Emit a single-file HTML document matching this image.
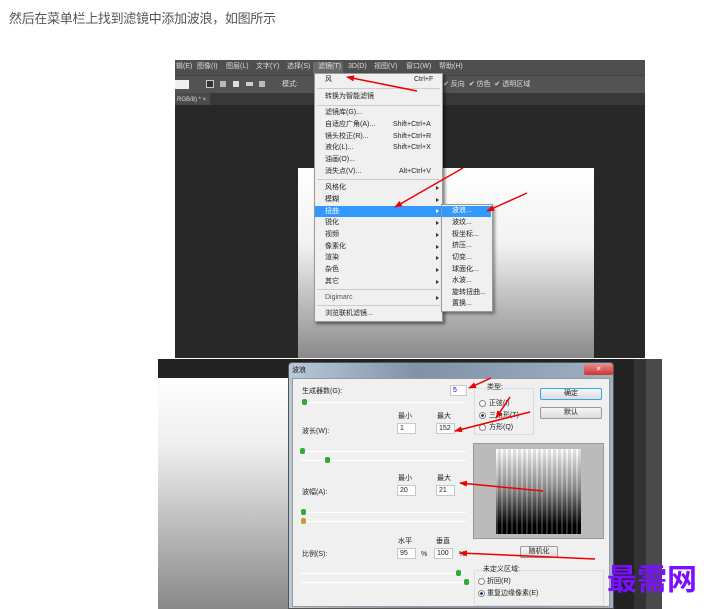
<!DOCTYPE html>
<html><head><meta charset="utf-8">
<style>
*{margin:0;padding:0;box-sizing:border-box}
body{width:719px;height:609px;background:#fff;position:relative;overflow:hidden;font-family:"Liberation Sans","Noto Sans CJK SC",sans-serif}
.a{position:absolute}
.t{position:absolute;font-size:7px;line-height:8px;white-space:nowrap;color:#222}
.mb{color:#ddd}
.ar{position:absolute;left:436px;width:0;height:0;border-left:3px solid #333;border-top:2.5px solid transparent;border-bottom:2.5px solid transparent}
.sep{position:absolute;height:1px;background:#ccc}
.in{position:absolute;background:#fff;border:1px solid #c8c8c8;font-size:7px;line-height:9px;padding-left:2px;color:#222}
.sl{position:absolute;height:1px;background:#aaa;border-bottom:1px solid #fff}
.rad{position:absolute;width:7px;height:7px;border-radius:50%;border:1px solid #888;background:#fff}
.btn{position:absolute;border:1px solid #999;border-radius:2px;background:linear-gradient(#f6f6f6,#dcdcdc);font-size:7px;text-align:center;line-height:10px;color:#222}
.knob{position:absolute;width:5px;height:6px;background:#3a3;border-radius:2px}
</style></head><body>
<div class="a" style="left:9px;top:8px;font-size:13px;color:#555;letter-spacing:-0.3px">然后在菜单栏上找到滤镜中添加波浪，如图所示</div>

<div class="a" style="left:175px;top:60px;width:470px;height:298px;background:#282828"></div>
<div class="a" style="left:175px;top:60px;width:470px;height:15px;background:#4f4f4f"></div>
<div class="a" style="left:175px;top:75px;width:470px;height:18px;background:#535353;border-top:1px solid #444"></div>
<div class="a" style="left:175px;top:93px;width:470px;height:12px;background:#383838"></div>
<div class="a" style="left:175px;top:93px;width:35px;height:12px;background:#4a4a4a"></div>
<div class="t mb" style="left:177px;top:96px;font-size:6px">RGB/8) * ×</div>
<div class="t mb" style="left:176px;top:63px">辑(E)</div>
<div class="t mb" style="left:197px;top:63px">图像(I)</div>
<div class="t mb" style="left:226px;top:63px">图层(L)</div>
<div class="t mb" style="left:256px;top:63px">文字(Y)</div>
<div class="t mb" style="left:287px;top:63px">选择(S)</div>
<div class="a" style="left:313px;top:62px;width:30px;height:12px;background:#6a6a6a"></div>
<div class="t mb" style="left:318px;top:63px">滤镜(T)</div>
<div class="t mb" style="left:348px;top:63px">3D(D)</div>
<div class="t mb" style="left:374px;top:63px">视图(V)</div>
<div class="t mb" style="left:406px;top:63px">窗口(W)</div>
<div class="t mb" style="left:439px;top:63px">帮助(H)</div>
<div class="a" style="left:175px;top:80px;width:14px;height:9px;background:#eee"></div>
<div class="a" style="left:206px;top:80px;width:8px;height:8px;border:1px solid #ccc;background:#333"></div>
<div class="a" style="left:220px;top:81px;width:6px;height:6px;background:#bbb"></div>
<div class="a" style="left:233px;top:81px;width:6px;height:6px;background:#ddd"></div>
<div class="a" style="left:246px;top:82px;width:7px;height:4px;background:#ccc"></div>
<div class="a" style="left:259px;top:81px;width:6px;height:6px;background:#bbb"></div>
<div class="t mb" style="left:282px;top:81px">模式:</div>
<div class="t mb" style="left:443px;top:81px">✔ 反向 &nbsp;✔ 仿色 &nbsp;✔ 透明区域</div>
<div class="a" style="left:298px;top:168px;width:296px;height:190px;background:linear-gradient(#fff 0%,#f2f2f2 40%,#8a8a8a 100%)"></div>

<div class="a" style="left:314px;top:73px;width:129px;height:249px;background:#f0f0f0;border:1px solid #999;box-shadow:2px 2px 3px rgba(0,0,0,.5)"></div>
<div class="t" style="left:325px;top:76px">风</div><div class="t" style="left:414px;top:76px">Ctrl+F</div>
<div class="sep" style="left:317px;top:88px;width:123px"></div>
<div class="t" style="left:325px;top:93px">转换为智能滤镜</div>
<div class="sep" style="left:317px;top:105px;width:123px"></div>
<div class="t" style="left:325px;top:109px">滤镜库(G)...</div>
<div class="t" style="left:325px;top:121px">自适应广角(A)...</div><div class="t" style="left:393px;top:121px">Shift+Ctrl+A</div>
<div class="t" style="left:325px;top:133px">镜头校正(R)...</div><div class="t" style="left:393px;top:133px">Shift+Ctrl+R</div>
<div class="t" style="left:325px;top:144px">液化(L)...</div><div class="t" style="left:393px;top:144px">Shift+Ctrl+X</div>
<div class="t" style="left:325px;top:156px">油画(O)...</div>
<div class="t" style="left:325px;top:168px">消失点(V)...</div><div class="t" style="left:399px;top:168px">Alt+Ctrl+V</div>
<div class="sep" style="left:317px;top:179px;width:123px"></div>
<div class="a" style="left:315px;top:206px;width:127px;height:11px;background:#3399ff"></div>
<div class="t" style="left:325px;top:184px">风格化</div>
<div class="t" style="left:325px;top:196px">模糊</div>
<div class="t" style="left:325px;top:208px;color:#fff">扭曲</div>
<div class="t" style="left:325px;top:219px">锐化</div>
<div class="t" style="left:325px;top:231px">视频</div>
<div class="t" style="left:325px;top:243px">像素化</div>
<div class="t" style="left:325px;top:254px">渲染</div>
<div class="t" style="left:325px;top:266px">杂色</div>
<div class="t" style="left:325px;top:278px">其它</div>
<div class="ar" style="top:186px"></div>
<div class="ar" style="top:198px"></div>
<div class="ar" style="top:209px;border-left-color:#fff"></div>
<div class="ar" style="top:221px"></div>
<div class="ar" style="top:233px"></div>
<div class="ar" style="top:245px"></div>
<div class="ar" style="top:256px"></div>
<div class="ar" style="top:268px"></div>
<div class="ar" style="top:280px"></div>
<div class="sep" style="left:317px;top:289px;width:123px"></div>
<div class="t" style="left:325px;top:294px;color:#555">Digimarc</div><div class="ar" style="top:296px"></div>
<div class="sep" style="left:317px;top:305px;width:123px"></div>
<div class="t" style="left:325px;top:310px">浏览联机滤镜...</div>
<div class="a" style="left:441px;top:204px;width:52px;height:108px;background:#f0f0f0;border:1px solid #999;box-shadow:2px 2px 3px rgba(0,0,0,.4)"></div>
<div class="a" style="left:442px;top:206px;width:49px;height:11px;background:#3399ff"></div>
<div class="t" style="left:452px;top:207px;color:#fff">波浪...</div>
<div class="t" style="left:452px;top:219px">波纹...</div>
<div class="t" style="left:452px;top:231px">极坐标...</div>
<div class="t" style="left:452px;top:242px">挤压...</div>
<div class="t" style="left:452px;top:254px">切变...</div>
<div class="t" style="left:452px;top:266px">球面化...</div>
<div class="t" style="left:452px;top:277px">水波...</div>
<div class="t" style="left:452px;top:289px">旋转扭曲...</div>
<div class="t" style="left:452px;top:300px">置换...</div>

<div class="a" style="left:158px;top:359px;width:504px;height:250px;background:#222"></div>
<div class="a" style="left:158px;top:378px;width:130px;height:231px;background:linear-gradient(#fff 0%,#eee 30%,#888 100%)"></div>
<div class="a" style="left:634px;top:359px;width:12px;height:250px;background:#333"></div>
<div class="a" style="left:646px;top:359px;width:16px;height:250px;background:#4a4a4a"></div>
<div class="a" style="left:288px;top:362px;width:326px;height:247px;background:linear-gradient(90deg,#b9c9d8,#7f92a8 40%,#9fb0c2);border:1px solid #555;border-radius:4px 4px 0 0"></div>
<div class="t" style="left:292px;top:367px">波浪</div>
<div class="a" style="left:584px;top:364px;width:29px;height:11px;background:linear-gradient(#e88,#c33);border-radius:2px;color:#fff;font-size:7px;text-align:center;line-height:11px">✕</div>
<div class="a" style="left:292px;top:378px;width:318px;height:229px;background:#f0f0f0;border:1px solid #999"></div>
<div class="t" style="left:302px;top:388px">生成器数(G):</div>
<div class="in" style="left:450px;top:385px;width:17px;height:11px;color:#00f">5</div>
<div class="sl" style="left:302px;top:402px;width:164px"></div><div class="knob" style="left:302px;top:399px"></div>
<div class="a" style="left:474px;top:388px;width:60px;height:47px;border:1px solid #ddd"></div>
<div class="t" style="left:487px;top:384px;background:#f0f0f0">类型:</div>
<div class="rad" style="left:479px;top:400px"></div><div class="t" style="left:489px;top:400px">正弦(I)</div>
<div class="rad" style="left:479px;top:412px;background:radial-gradient(#236 35%,#fff 45%)"></div><div class="t" style="left:489px;top:412px">三角形(T)</div>
<div class="rad" style="left:479px;top:424px"></div><div class="t" style="left:489px;top:424px">方形(Q)</div>
<div class="btn" style="left:540px;top:388px;width:62px;height:12px;border-color:#3ad">确定</div>
<div class="btn" style="left:540px;top:407px;width:62px;height:12px">默认</div>
<div class="t" style="left:398px;top:413px">最小</div><div class="t" style="left:437px;top:413px">最大</div>
<div class="t" style="left:302px;top:428px">波长(W):</div>
<div class="in" style="left:397px;top:423px;width:19px;height:11px">1</div>
<div class="in" style="left:436px;top:423px;width:19px;height:11px">152</div>
<div class="sl" style="left:300px;top:451px;width:166px"></div><div class="knob" style="left:300px;top:448px"></div>
<div class="sl" style="left:300px;top:460px;width:166px"></div><div class="knob" style="left:325px;top:457px"></div>
<div class="a" style="left:473px;top:443px;width:131px;height:96px;background:#bbb;border:1px solid #999"></div>
<div class="a" style="left:496px;top:449px;width:85px;height:85px;background:linear-gradient(#fff,#999 45%,#000 90%)"></div>
<div class="a" style="left:496px;top:449px;width:85px;height:85px;background:repeating-linear-gradient(90deg,rgba(255,255,255,.25) 0 2px,rgba(0,0,0,.15) 2px 5px);opacity:.7"></div>
<div class="t" style="left:398px;top:475px">最小</div><div class="t" style="left:437px;top:475px">最大</div>
<div class="t" style="left:302px;top:489px">波幅(A):</div>
<div class="in" style="left:397px;top:485px;width:19px;height:11px">20</div>
<div class="in" style="left:436px;top:485px;width:19px;height:11px">21</div>
<div class="sl" style="left:300px;top:512px;width:166px"></div><div class="knob" style="left:301px;top:509px"></div>
<div class="sl" style="left:300px;top:521px;width:166px"></div><div class="knob" style="left:301px;top:518px;background:#c93"></div>
<div class="t" style="left:398px;top:538px">水平</div><div class="t" style="left:436px;top:538px">垂直</div>
<div class="t" style="left:302px;top:551px">比例(S):</div>
<div class="in" style="left:397px;top:548px;width:19px;height:11px">95</div><div class="t" style="left:421px;top:551px">%</div>
<div class="in" style="left:434px;top:548px;width:19px;height:11px">100</div><div class="t" style="left:459px;top:551px">%</div>
<div class="btn" style="left:520px;top:546px;width:38px;height:12px">随机化</div>
<div class="sl" style="left:300px;top:573px;width:166px"></div><div class="knob" style="left:456px;top:570px"></div>
<div class="sl" style="left:300px;top:582px;width:166px"></div><div class="knob" style="left:464px;top:579px"></div>
<div class="a" style="left:474px;top:570px;width:130px;height:36px;border:1px solid #ddd"></div>
<div class="t" style="left:483px;top:566px;background:#f0f0f0">未定义区域:</div>
<div class="rad" style="left:478px;top:578px"></div><div class="t" style="left:487px;top:578px">折回(R)</div>
<div class="rad" style="left:478px;top:590px;background:radial-gradient(#236 35%,#fff 45%)"></div><div class="t" style="left:487px;top:590px">重复边缘像素(E)</div>

<svg class="a" style="left:0;top:0" width="719" height="609">
<defs><marker id="m" markerWidth="8" markerHeight="6" refX="7" refY="3" orient="auto" markerUnits="userSpaceOnUse"><path d="M0,0L8,3L0,6z" fill="#e00"/></marker></defs>
<g stroke="#e00" stroke-width="1.5" fill="none" marker-end="url(#m)">
<line x1="417" y1="91" x2="347" y2="77"/>
<line x1="463" y1="168" x2="395" y2="207"/>
<line x1="527" y1="193" x2="487" y2="211"/>
<line x1="491" y1="378" x2="469" y2="388"/>
<line x1="510" y1="397" x2="496" y2="418"/>
<line x1="530" y1="412" x2="455" y2="431"/>
<line x1="543" y1="491" x2="460" y2="483"/>
<line x1="595" y1="559" x2="460" y2="553"/>
</g></svg>
<div class="a" style="left:607px;top:558px;font-family:'Noto Sans CJK SC',sans-serif;font-size:30px;line-height:38px;color:#7a10ff;font-weight:bold;white-space:nowrap">最需网</div>
</body></html>
